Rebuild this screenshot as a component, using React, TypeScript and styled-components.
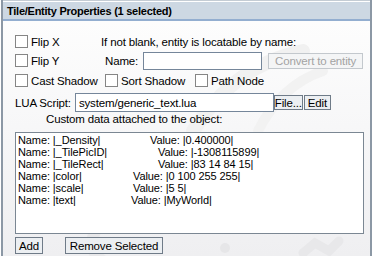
import React from 'react';
import styled, { createGlobalStyle } from 'styled-components';

const GlobalStyle = createGlobalStyle`
    html, body {
        margin: 0;
        padding: 0;
        background: #ffffff;
    }
    body {
        font-family: 'Liberation Sans', Arial, sans-serif;
        font-size: 11.5px;
        letter-spacing: -0.15px;
        color: #000000;
    }
`;

const Window = styled.div`
    width: 367px;
    height: 256px;
    margin-left: 1px;
    border-left: 2px solid #8c98a5;
    border-right: 2px solid #8c98a5;
    display: flex;
    flex-direction: column;
    overflow: hidden;
`;

const TitleBar = styled.div`
    height: 16px;
    border-top: 1px solid #c4ccd4;
    box-shadow: inset 0 1px 0 #ffffff;
    padding-top: 2px;
    background: #cdd8e3;
    border-bottom: 2px solid #93aed0;
    display: flex;
    align-items: center;
    padding-left: 4px;
`;

const Title = styled.span`
    font-weight: bold;
    font-size: 11px;
    letter-spacing: -0.25px;
`;

const Body = styled.div`
    flex: 1;
    position: relative;
    padding: 12px 0 0 12px;
    background: linear-gradient(#fdfdfd 0%, #f7f7f8 45%, #efeff1 100%);
    display: flex;
    flex-direction: column;
`;

const Watermark = styled.svg`
    position: absolute;
    left: 0;
    top: 0;
    pointer-events: none;
`;

const Row = styled.div<{ $h: number; $mt?: number }>`
    position: relative;
    display: flex;
    align-items: center;
    height: ${p => p.$h}px;
    margin-top: ${p => p.$mt ?? 0}px;
`;

const CheckCell = styled.label<{ $w?: number }>`
    display: flex;
    align-items: center;
    width: ${p => (p.$w ? `${p.$w}px` : 'auto')};
    white-space: nowrap;
`;

const Box = styled.span`
    width: 11px;
    height: 11px;
    border: 1px solid #858585;
    background: #ffffff;
    margin-right: 3px;
    flex: none;
`;

const Text = styled.span<{ $ml?: number }>`
    margin-left: ${p => p.$ml ?? 0}px;
    white-space: nowrap;
`;

const Input = styled.div<{ $w: number; $h: number; $ml?: number }>`
    width: ${p => p.$w}px;
    height: ${p => p.$h}px;
    margin-left: ${p => p.$ml ?? 0}px;
    box-sizing: border-box;
    border: 1px solid #75869a;
    background: #ffffff;
    padding: 0 3px;
    display: flex;
    align-items: center;
    white-space: nowrap;
    overflow: hidden;
`;

const Button = styled.div<{ $w: number; $h?: number; $ml?: number; $disabled?: boolean }>`
    width: ${p => p.$w}px;
    height: ${p => p.$h ?? 15}px;
    margin-left: ${p => p.$ml ?? 0}px;
    box-sizing: border-box;
    border: 1px solid ${p => (p.$disabled ? '#c3c8cd' : '#6f7b88')};
    background: ${p => (p.$disabled ? '#f4f5f6' : '#eceff2')};
    color: ${p => (p.$disabled ? '#a3a3a3' : '#000000')};
    display: flex;
    align-items: center;
    justify-content: center;
    white-space: nowrap;
    overflow: hidden;
`;

const Caption = styled.div`
    position: relative;
    height: 13px;
    line-height: 13px;
    margin-top: 1px;
    padding-left: 31px;
`;

const ListBox = styled.div`
    position: relative;
    width: 349px;
    height: 102px;
    margin-top: 6px;
    box-sizing: border-box;
    border: 1px solid #7b8793;
    background: #ffffff;
    padding: 1px 0 0 2px;
    font-size: 11px;
    letter-spacing: -0.1px;
`;

const ListItem = styled.div`
    position: relative;
    height: 12px;
    line-height: 12px;
    white-space: nowrap;
`;

const ItemValue = styled.span`
    position: absolute;
    top: 0;
`;

const ButtonRow = styled.div`
    position: relative;
    display: flex;
    align-items: center;
    margin-top: 3px;
    height: 17px;
`;

const items = [
    { name: '|_Density|', value: '|0.400000|', x: 132 },
    { name: '|_TilePicID|', value: '|-1308115899|', x: 140 },
    { name: '|_TileRect|', value: '|83 14 84 15|', x: 140 },
    { name: '|color|', value: '|0 100 255 255|', x: 115 },
    { name: '|scale|', value: '|5 5|', x: 115 },
    { name: '|text|', value: '|MyWorld|', x: 113 },
];

const App = () => (
    <>
        <GlobalStyle />
        <Window>
            <TitleBar>
                <Title>Tile/Entity Properties (1 selected)</Title>
            </TitleBar>
            <Body>
                <Watermark width="367" height="236" viewBox="0 0 367 236">
                    <path d="M190 110 C 215 70, 250 40, 300 30" stroke="#f1f1f1" strokeWidth="14" fill="none" strokeLinecap="round" />
                    <path d="M255 110 C 270 80, 290 60, 320 50" stroke="#f2f2f2" strokeWidth="10" fill="none" strokeLinecap="round" />
                    <path d="M95 205 C 85 220, 90 235, 100 240" stroke="#e8e8ea" strokeWidth="12" fill="none" strokeLinecap="round" />
                    <circle cx="222" cy="227" r="5" fill="#e6e6e8" />
                    <path d="M300 232 L 312 222 L 326 230 L 336 220" stroke="#e8e8ea" strokeWidth="9" fill="none" strokeLinecap="round" />
                </Watermark>
                <Row $h={17}>
                    <CheckCell $w={86}>
                        <Box />
                        Flip X
                    </CheckCell>
                    <Text>If not blank, entity is locatable by name:</Text>
                </Row>
                <Row $h={19} $mt={1}>
                    <CheckCell $w={90}>
                        <Box />
                        Flip Y
                    </CheckCell>
                    <Text>Name:</Text>
                    <Input $w={119} $h={18} $ml={5} />
                    <Button $w={95} $h={16} $ml={6} $disabled>
                        Convert to entity
                    </Button>
                </Row>
                <Row $h={17} $mt={2}>
                    <CheckCell $w={90}>
                        <Box />
                        Cast Shadow
                    </CheckCell>
                    <CheckCell $w={90}>
                        <Box />
                        Sort Shadow
                    </CheckCell>
                    <CheckCell>
                        <Box />
                        Path Node
                    </CheckCell>
                </Row>
                <Row $h={19} $mt={4}>
                    <Text>LUA Script:</Text>
                    <Input $w={199} $h={19} $ml={4}>
                        system/generic_text.lua
                    </Input>
                    <Button $w={29} $h={15}>
                        File...
                    </Button>
                    <Button $w={27} $h={15} $ml={1}>
                        Edit
                    </Button>
                </Row>
                <Caption>Custom data attached to the object:</Caption>
                <ListBox>
                    {items.map(item => (
                        <ListItem key={item.name}>
                            Name: {item.name}
                            <ItemValue style={{ left: item.x }}>Value: {item.value}</ItemValue>
                        </ListItem>
                    ))}
                </ListBox>
                <ButtonRow>
                    <Button $w={28} $h={17}>
                        Add
                    </Button>
                    <Button $w={98} $h={17} $ml={22}>
                        Remove Selected
                    </Button>
                </ButtonRow>
            </Body>
        </Window>
    </>
);

export default App;
